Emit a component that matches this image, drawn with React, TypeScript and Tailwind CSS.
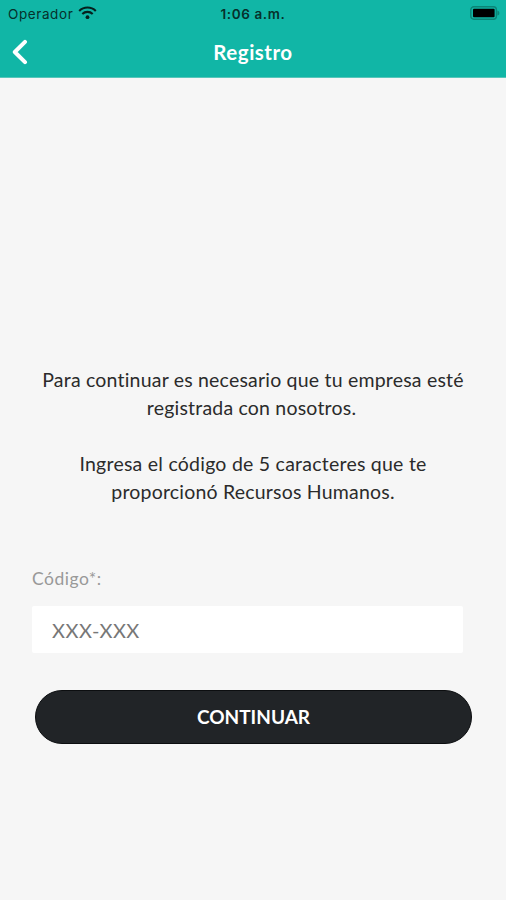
import React from "react";

const WifiIcon = () => (
  <svg className="w-[19px] h-[14px]" viewBox="0 0 19 14" fill="none" stroke="#06201d" strokeWidth={2.1}>
    <path d="M1.2 5C5.8 0.4 13.2 0.4 17.8 5" />
    <path d="M4.3 8C7.2 5.2 11.8 5.2 14.7 8" />
    <circle cx="9.5" cy="11.2" r="1.9" fill="#06201d" stroke="none" />
  </svg>
);

const BatteryIcon = () => (
  <svg className="w-[30px] h-[14px]" viewBox="0 0 30 14" fill="none">
    <rect x="0.8" y="0.8" width="25.6" height="12.4" rx="3" stroke="#0b8577" strokeWidth={1.4} />
    <rect x="3" y="2.8" width="21.6" height="8.4" rx="1" fill="#000" />
    <path d="M27.4 4.4C30 5.2 30 8.8 27.4 9.6Z" fill="#0b8577" />
  </svg>
);

const StatusBar = () => (
  <div className="grid grid-cols-3 items-center h-[26px] pl-[8px] pr-[6px] text-[#06302b] font-['Inter',sans-serif] text-[13.5px] leading-[18px]">
    <div className="flex items-center gap-[5px]">
      <span className="pt-[2px] tracking-[0.6px]">Operador</span>
      <WifiIcon />
    </div>
    <span className="pt-[2px] pr-[2px] text-center font-semibold tracking-[0.6px]">1:06 a.m.</span>
    <div className="flex justify-end">
      <BatteryIcon />
    </div>
  </div>
);

const NavBar = () => (
  <div className="grid grid-cols-3 items-center h-[52px] px-[12px]">
    <button aria-label="Regresar" className="w-[16px]">
      <svg className="w-[16px] h-[26px]" viewBox="0 0 16 26" fill="none" stroke="#fff" strokeWidth={4} strokeLinecap="round" strokeLinejoin="round">
        <path d="M13 2.8L2.8 13L13 23.2" />
      </svg>
    </button>
    <h1 className="pb-px text-center text-white text-[20.5px] leading-[28px] font-bold tracking-[0.5px]">Registro</h1>
  </div>
);

export default function App() {
  return (
    <div className="h-[900px] w-full bg-[#f6f6f6] font-['Lato',sans-serif]">
      <header className="h-[78px] bg-[#11b6a6] border-b border-[#58c6ba]">
        <StatusBar />
        <NavBar />
      </header>

      <main className="flex flex-col pt-[288px]">
        <div className="text-center text-[#2b2b2b] text-[19.5px] leading-[28px] whitespace-nowrap">
          <p className="tracking-[0.2px]">Para continuar es necesario que tu empresa esté</p>
          <p className="pr-[3px] tracking-[0.2px]">registrada con nosotros.</p>
          <p className="mt-[28px] tracking-[0.24px]">Ingresa el código de 5 caracteres que te</p>
          <p className="tracking-[0.2px]">proporcionó Recursos Humanos.</p>
        </div>

        <label htmlFor="codigo" className="mt-[59px] ml-[32px] text-[#999] text-[17.5px] leading-[28px] tracking-[0.5px]">
          Código*:
        </label>
        <input
          id="codigo"
          type="text"
          placeholder="XXX-XXX"
          className="mt-[13px] ml-[32px] w-[431px] h-[47px] px-[20px] rounded-[2px] bg-white text-[20px] tracking-[0.5px] placeholder:text-[#777] outline-none"
        />

        <button className="mt-[37px] ml-[35px] w-[437px] h-[54px] rounded-full bg-[#212427] border border-[#0c0e10] text-white text-[19px] font-bold">
          CONTINUAR
        </button>
      </main>
    </div>
  );
}
